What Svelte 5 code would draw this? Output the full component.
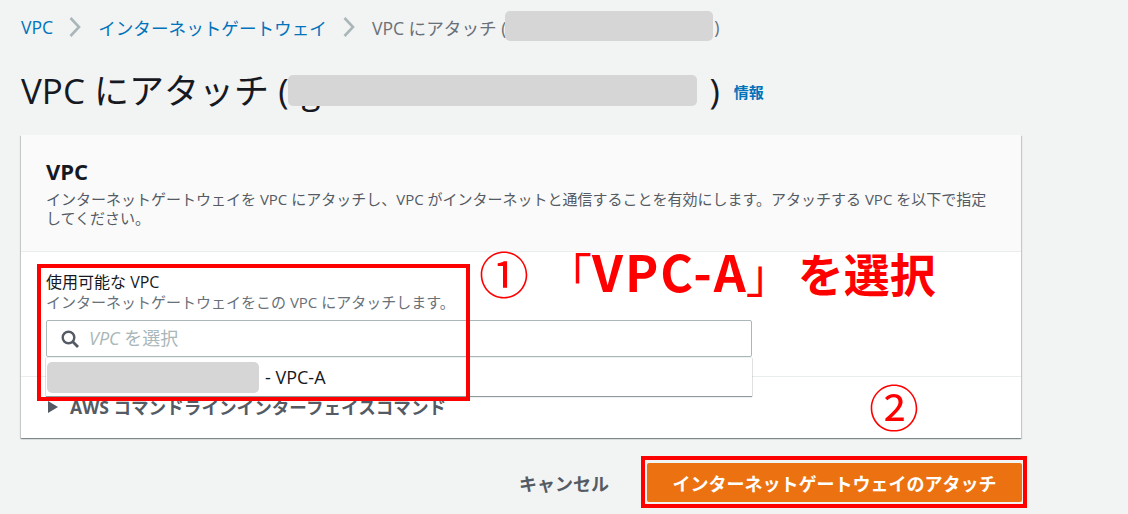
<script>
  const crumbs = ['VPC', 'インターネットゲートウェイ'];
</script>

<div class="page">
  <nav class="crumbs">
    {#each crumbs as c}
      <a href="#top">{c}</a>
      <svg class="sep" width="12" height="20" viewBox="0 0 12 20"><path d="M1.5 1 10 10 1.5 19" fill="none" stroke="#aab7b8" stroke-width="2.6" /></svg>
    {/each}
    <span class="current">VPC にアタッチ (<span class="mask crumb-mask"></span>)</span>
  </nav>

  <header class="title-row">
    <h1>VPC にアタッチ (<span class="title-id"><span class="peek">g</span><span class="mask title-mask"></span></span>)</h1>
    <a class="info" href="#top">情報</a>
  </header>

  <section class="card">
    <div class="card-head">
      <h2>VPC</h2>
      <p>インターネットゲートウェイを VPC にアタッチし、VPC がインターネットと通信することを有効にします。アタッチする VPC を以下で指定してください。</p>
    </div>

    <div class="card-body">
      <div class="label">使用可能な VPC</div>
      <div class="hint">インターネットゲートウェイをこの VPC にアタッチします。</div>
      <div class="select">
        <svg width="20" height="20" viewBox="0 0 20 20"><circle cx="8.5" cy="8.5" r="5.8" fill="none" stroke="#545b64" stroke-width="2.4" /><path d="M12.8 12.8 18 18" stroke="#545b64" stroke-width="2.8" /></svg>
        <span class="placeholder"><em>VPC</em> を選択</span>
        <div class="menu">
          <span class="mask menu-mask"></span>
          <span class="option">- VPC-A</span>
        </div>
      </div>
    </div>

    <div class="card-foot">
      <span class="tri"></span>
      <span>AWS コマンドラインインターフェイスコマンド</span>
    </div>
  </section>

  <div class="actions">
    <button class="cancel">キャンセル</button>
    <button class="primary">インターネットゲートウェイのアタッチ</button>
  </div>

  <!-- 赤い注釈 -->
  <div class="box box-select"></div>
  <div class="box box-button"></div>
  <div class="note num-1">①</div>
  <div class="note msg"><span class="bracket">「</span><span class="latin">VPC-A</span><span class="bracket">」</span><span class="tail">を選択</span></div>
  <div class="note num-2">②</div>
</div>

<style>
  :global(body) {
    margin: 0;
    background: #f2f3f3;
  }

  .page {
    position: relative;
    height: 514px;
    overflow: hidden;
    box-sizing: border-box;
    padding: 14px 107px 0 21px;
    font-family: "Open Sans", "Noto Sans CJK JP", sans-serif;
    color: #16191f;
    background: #f2f3f3;
  }

  .crumbs {
    display: flex;
    align-items: center;
    height: 26px;
    font-size: 17.6px;
    color: #687078;
  }
  .crumbs a { color: #0073bb; text-decoration: none; }
  .sep { margin: 0 17px 0 16px; }
  .current { display: flex; align-items: center; }

  .mask {
    display: block;
    background: #d6d6d6;
    border-radius: 5px;
  }
  .crumb-mask { width: 208px; height: 30px; margin: -2px 1px 0 -1px; }

  .title-row {
    display: flex;
    align-items: center;
    margin-top: 26px;
    height: 50px;
  }
  h1 {
    display: flex;
    align-items: center;
    margin: 0;
    font-size: 35px;
    font-weight: 400;
    line-height: 50px;
  }
  .title-id {
    position: relative;
    display: block;
    width: 421px;
    height: 50px;
  }
  .peek { position: absolute; left: 13px; top: 0; }
  .title-mask {
    position: absolute;
    left: 0;
    top: 9px;
    width: 409px;
    height: 31px;
  }
  .info {
    margin-left: 14px;
    font-size: 15px;
    font-weight: 700;
    color: #0073bb;
    text-decoration: none;
  }

  .card {
    margin-top: 19px;
    height: 303px;
    background: #fff;
    box-shadow: 0 1px 1px 0 rgba(0, 28, 36, 0.3), 1px 1px 1px 0 rgba(0, 28, 36, 0.15), -1px 1px 1px 0 rgba(0, 28, 36, 0.15);
    display: flex;
    flex-direction: column;
  }
  .card-head {
    height: 117px;
    box-sizing: border-box;
    padding: 21px 25px 0;
    background: #fafafa;
    border-bottom: 1px solid #eaeded;
  }
  h2 {
    margin: 0;
    font-size: 22px;
    font-weight: 700;
    line-height: 30px;
  }
  .card-head p {
    margin: 4px 0 0;
    font-size: 15px;
    line-height: 19px;
    color: #545b64;
  }

  .card-body {
    height: 125px;
    box-sizing: border-box;
    padding: 19px 25px 0;
    border-bottom: 1px solid #eaeded;
  }
  .label { font-size: 16px; line-height: 22px; }
  .hint { font-size: 15px; line-height: 19px; color: #687078; }
  .select {
    position: relative;
    display: flex;
    align-items: center;
    gap: 9px;
    width: 706px;
    height: 37px;
    margin-top: 8px;
    box-sizing: border-box;
    padding-left: 13px;
    background: #fff;
    border: 1px solid #aab7b8;
    border-radius: 2px;
  }
  .placeholder { font-size: 18px; color: #aab7b8; margin-top: -3px; }
  .placeholder em { font-style: italic; }
  .menu {
    position: absolute;
    left: -1px;
    right: -1px;
    top: 37px;
    height: 38px;
    box-sizing: border-box;
    display: flex;
    align-items: center;
    gap: 6px;
    padding-left: 1px;
    background: #fff;
    box-shadow: 0 1px 1px 0 rgba(0, 28, 36, 0.4), 0 0 1px 0 rgba(0, 28, 36, 0.4);
  }
  .menu-mask { width: 212px; height: 31px; }
  .option { font-size: 18px; }

  .card-foot {
    display: flex;
    align-items: center;
    gap: 12px;
    padding: 18px 0 0 27px;
    font-size: 17.6px;
    font-weight: 700;
    line-height: 24px;
    color: #545b64;
  }
  .tri {
    width: 0;
    height: 0;
    border-style: solid;
    border-width: 6px 0 6px 10px;
    border-color: transparent transparent transparent #545b64;
  }

  .actions {
    display: flex;
    justify-content: flex-end;
    align-items: center;
    margin-top: 25px;
    gap: 38px;
    margin-right: -1px;
  }
  button {
    font-family: inherit;
    font-size: 18px;
    font-weight: 700;
    border: 0;
    padding: 0;
    background: none;
  }
  .cancel { color: #545b64; }
  .primary {
    width: 375px;
    height: 39px;
    background: #ec7211;
    color: #fff;
    border-radius: 2px;
  }

  .box {
    position: absolute;
    box-sizing: border-box;
    border: 4px solid #ff0000;
  }
  .box-select { left: 37px; top: 264px; width: 433px; height: 137px; }
  .box-button { left: 641px; top: 456px; width: 386px; height: 52px; }

  .note {
    position: absolute;
    color: #ff0000;
    font-family: "Noto Sans CJK JP", sans-serif;
    white-space: nowrap;
  }
  .num-1, .num-2 { font-size: 50px; line-height: 46px; }
  .num-1 { left: 479px; top: 249px; }
  .num-2 { left: 869px; top: 382px; }
  .msg {
    left: 546px;
    top: 240px;
    font-size: 46px;
    line-height: 60px;
    font-weight: 700;
  }
  .bracket { font-weight: 400; }
  .latin { font-size: 50px; letter-spacing: 2px; margin-right: -2px; }
  .tail { margin-left: 6px; }
</style>
